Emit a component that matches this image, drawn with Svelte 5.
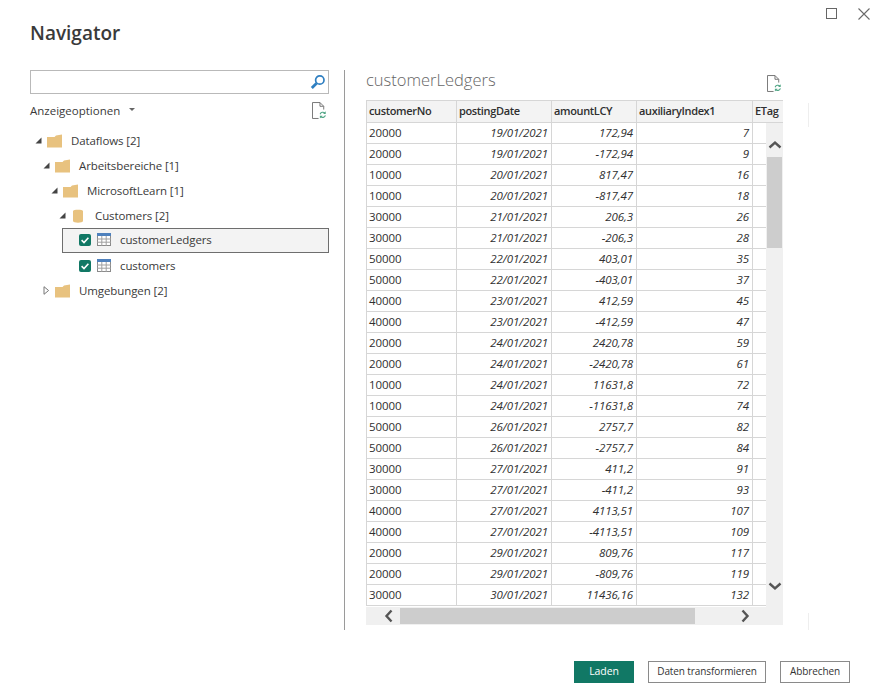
<script>
  const tree = [
    { label: 'Dataflows [2]', depth: 0, kind: 'folder', open: true },
    { label: 'Arbeitsbereiche [1]', depth: 1, kind: 'folder', open: true },
    { label: 'MicrosoftLearn [1]', depth: 2, kind: 'folder', open: true },
    { label: 'Customers [2]', depth: 3, kind: 'db', open: true },
    { label: 'customerLedgers', depth: 4, kind: 'table', selected: true },
    { label: 'customers', depth: 4, kind: 'table' },
    { label: 'Umgebungen [2]', depth: 1, kind: 'folder', open: false }
  ];
  const rows = [
    ['20000','19/01/2021','172,94','7'],['20000','19/01/2021','-172,94','9'],
    ['10000','20/01/2021','817,47','16'],['10000','20/01/2021','-817,47','18'],
    ['30000','21/01/2021','206,3','26'],['30000','21/01/2021','-206,3','28'],
    ['50000','22/01/2021','403,01','35'],['50000','22/01/2021','-403,01','37'],
    ['40000','23/01/2021','412,59','45'],['40000','23/01/2021','-412,59','47'],
    ['20000','24/01/2021','2420,78','59'],['20000','24/01/2021','-2420,78','61'],
    ['10000','24/01/2021','11631,8','72'],['10000','24/01/2021','-11631,8','74'],
    ['50000','26/01/2021','2757,7','82'],['50000','26/01/2021','-2757,7','84'],
    ['30000','27/01/2021','411,2','91'],['30000','27/01/2021','-411,2','93'],
    ['40000','27/01/2021','4113,51','107'],['40000','27/01/2021','-4113,51','109'],
    ['20000','29/01/2021','809,76','117'],['20000','29/01/2021','-809,76','119'],
    ['30000','30/01/2021','11436,16','132']
  ];
</script>

{#snippet docRefresh()}
  <svg class="docicon" width="15" height="17" viewBox="0 0 16 18" fill="none">
    <path d="M7 17.5H.5V.5H8.5L12.5 4.5V8M8.5 .5V4.5H12.5" stroke="#707070" stroke-width="1"/>
    <path d="M8.7 13A3 3 0 0 1 13.8 11.8M14.3 14.2A3 3 0 0 1 9.2 15.4" stroke="#4fa585" stroke-width="1.2"/>
    <path d="M14.6 9.8V12.6H11.8ZM8.4 17.4V14.6H11.2Z" fill="#4fa585"/>
  </svg>
{/snippet}

<div class="dialog">
  <div class="winctl">
    <span class="max"></span>
    <svg width="12" height="12" viewBox="0 0 12 12"><path d="M.5.5L11.5 11.5M11.5.5L.5 11.5" stroke="#6a6a6a" stroke-width="1.1"/></svg>
  </div>

  <h1>Navigator</h1>

  <div class="main">
    <section class="left">
      <div class="search">
        <svg width="16" height="16" viewBox="0 0 16 16" fill="none">
          <circle cx="9.8" cy="6" r="4.2" stroke="#2f7fc1" stroke-width="1.7"/>
          <path d="M6.6 9.2L1.8 14" stroke="#2f7fc1" stroke-width="2.8"/>
        </svg>
      </div>
      <div class="opts">
        <span>Anzeigeoptionen</span>
        <span class="caret"></span>
        {@render docRefresh()}
      </div>
      <ul class="tree">
        {#each tree as n}
          <li class="node" class:selected={n.selected} class:leaf={n.kind === 'table'} style:margin-left="{(n.kind === 'table' ? 0 : 5) + n.depth * 8}px">
            {#if n.kind === 'table'}
              <span class="check">
                <svg width="12" height="12" viewBox="0 0 12 12" fill="none"><path d="M2.6 6.2L5 8.5L9.4 3.8" stroke="#fff" stroke-width="1.6"/></svg>
              </span>
              <svg class="tbl" width="14" height="13" viewBox="0 0 14 13">
                <rect x="0.5" y="0.5" width="13" height="12" fill="#fff" stroke="#8a8a8a"/>
                <rect x="0" y="0" width="14" height="3" fill="#4f81bd"/>
                <path d="M0 6H14M0 9.2H14M4.8 3V13M9.2 3V13" stroke="#a0a0a0" stroke-width="1"/>
              </svg>
            {:else}
              <span class="arrow">
                <svg width="7" height="9" viewBox="0 0 7 9">
                  {#if n.open}
                    <path d="M6.5 1.5V7.5H.5Z" fill="#444"/>
                  {:else}
                    <path d="M1 .7L5.6 4.5L1 8.3Z" fill="#fff" stroke="#777"/>
                  {/if}
                </svg>
              </span>
              {#if n.kind === 'folder'}
                <svg class="ic" width="15" height="14" viewBox="0 0 15 14">
                  <path d="M0 3H7.5L9 1.6L15 .5V13.5H0Z" fill="#e8c27f"/>
                </svg>
              {:else}
                <svg class="ic db" width="10" height="14" viewBox="0 0 10 14">
                  <path d="M0 2C0 .4 10 .4 10 2V12C10 14.2 0 14.2 0 12Z" fill="#e8c27f"/>
                </svg>
              {/if}
            {/if}
            <span class="label">{n.label}</span>
          </li>
        {/each}
      </ul>
    </section>

    <div class="divider"></div>

    <section class="right">
      <div class="rhead">
        <h2>customerLedgers</h2>
        {@render docRefresh()}
      </div>
      <div class="grid">
        <div class="row head">
          <div>customerNo</div><div>postingDate</div><div>amountLCY</div><div>auxiliaryIndex1</div><div>ETag</div>
        </div>
        <div class="body">
          <div class="rows">
            {#each rows as r}
              <div class="row">
                <div>{r[0]}</div><div class="num">{r[1]}</div><div class="num">{r[2]}</div><div class="num">{r[3]}</div><div></div>
              </div>
            {/each}
          </div>
          <div class="vbar">
            <svg class="cv" width="14" height="9" viewBox="0 0 14 9" fill="none"><path d="M1.5 7.5L7 2.5L12.5 7.5" stroke="#555" stroke-width="2.4"/></svg>
            <div class="vthumb"></div>
            <svg class="cv down" width="14" height="9" viewBox="0 0 14 9" fill="none"><path d="M1.5 1.5L7 6.5L12.5 1.5" stroke="#555" stroke-width="2.4"/></svg>
          </div>
        </div>
        <div class="hbar">
          <svg width="9" height="14" viewBox="0 0 9 14" fill="none"><path d="M7.5 1.5L2.5 7L7.5 12.5" stroke="#555" stroke-width="2.4"/></svg>
          <div class="hthumb"></div>
          <svg class="next" width="9" height="14" viewBox="0 0 9 14" fill="none"><path d="M1.5 1.5L6.5 7L1.5 12.5" stroke="#555" stroke-width="2.4"/></svg>
        </div>
      </div>
    </section>
    <div class="ghost">
      <span></span>
      <span class="low"></span>
    </div>
  </div>

  <div class="actions">
    <button class="primary">Laden</button>
    <button class="transform">Daten transformieren</button>
    <button class="cancel">Abbrechen</button>
  </div>
</div>

<style>
  :global(body) { margin: 0; background: #fff; }
  .dialog {
    position: relative;
    width: 879px; height: 700px;
    box-sizing: border-box;
    padding: 22px 29px 0 30px;
    font-family: "Open Sans", "Noto Sans", sans-serif;
    font-size: 11.5px;
    color: #2f2f2f;
    letter-spacing: -0.1px;
    overflow: hidden;
  }
  .winctl {
    position: absolute; top: 8px; right: 9px;
    display: flex; gap: 21px; align-items: flex-start;
  }
  .max { width: 9px; height: 9px; border: 1px solid #666; }
  h1 { margin: 0; font-size: 19px; line-height: 23px; font-weight: 600; color: #3a3a3a; letter-spacing: 0; }

  .main { display: flex; margin-top: 25px; height: 560px; position: relative; }
  .left { width: 299px; flex: none; }
  .search {
    height: 22px; border: 1px solid #b9b9b9;
    display: flex; justify-content: flex-end; align-items: center; padding-right: 2px;
  }
  .opts { display: flex; align-items: center; height: 25px; margin-top: 4px; color: #3a3a3a; letter-spacing: 0; }
  .caret { width: 0; height: 0; margin-left: 9px; margin-bottom: 2px; border: 3px solid transparent; border-top: 3px solid #666; border-bottom: 0; }
  .opts .docicon { margin-left: auto; margin-right: 2px; }

  .tree { list-style: none; margin: 5px 0 0; padding: 0; }
  .node { display: flex; align-items: center; height: 25px; box-sizing: border-box; }
  .arrow { width: 12px; display: flex; flex: none; }
  .ic { flex: none; }
  .db { margin: 0 3px 0 2px; }
  .label { margin-left: 9px; color: #3a3a3a; }
  .leaf { padding-left: 17px; }
  .selected {
    background: #f3f3f3; border: 1px solid #6e6e6e;
    padding-left: 16px;
    padding-bottom: 2px;
  }
  .check {
    width: 12px; height: 12px; border-radius: 2px; background: #117865; flex: none; display: flex;
  }
  .tbl { margin-left: 6px; flex: none; }

  .divider { width: 1px; background: #9a9a9a; margin: 0 21px 0 15px; flex: none; }

  .right { width: 417px; flex: none; }
  .rhead { display: flex; justify-content: space-between; align-items: flex-start; height: 30px; padding-right: 1px; }
  .rhead .docicon { margin-top: 5px; }
  h2 { margin: 0; font-size: 16.5px; line-height: 19px; font-weight: 300; color: #666; letter-spacing: 0; }

  .grid { overflow: hidden; }
  .row {
    display: grid;
    grid-template-columns: 90px 95px 85px 116px 31px;
    height: 21px;
    box-sizing: border-box;
    border-bottom: 1px solid #d6d6d6;
    line-height: 20px;
    color: #2f2f2f;
  }
  .row > div { border-left: 1px solid #d6d6d6; padding: 0 3px 0 2px; white-space: nowrap; overflow: hidden; }
  .row .num { text-align: right; font-style: italic; padding-right: 3px; }
  .head { height: 23px; background: #f3f3f3; border-top: 1px solid #d6d6d6; border-bottom: 1px solid #d6d6d6; font-size: 11px; letter-spacing: -0.35px; font-weight: 600; line-height: 20px; }
  .body { display: flex; height: 484px; }
  .rows { width: 400px; overflow: hidden; flex: none; }
  .vbar {
    width: 17px; background: #f0f0f0; display: flex; flex-direction: column; align-items: center;
  }
  .cv { margin-top: 17px; flex: none; }
  .vthumb { width: 15px; height: 91px; margin-top: 8px; background: #cdcdcd; }
  .cv.down { margin-top: auto; margin-bottom: 16px; }
  .hbar { height: 18px; background: #f0f0f0; display: flex; align-items: center; padding-left: 18px; }
  .hthumb { width: 295px; height: 16px; margin-left: 7px; background: #cdcdcd; }
  .next { margin-left: 46px; }

  .ghost { position: absolute; left: 778px; top: 33px; bottom: 0; display: flex; flex-direction: column; justify-content: space-between; }
  .ghost span { display: block; width: 1px; height: 24px; background: #eeeeee; }
  .ghost .low { height: 17px; }

  .actions { position: absolute; top: 661px; right: 29px; display: flex; gap: 14px; }
  button {
    height: 22px; padding: 0 0 2px; box-sizing: border-box;
    background: #fff; border: 1px solid #8a8a8a; color: #333;
    font: inherit; font-size: 10px; letter-spacing: inherit;
  }
  .primary { width: 60px; font-size: 10.5px; background: #117865; border-color: #117865; color: #fff; }
  .transform { width: 118px; }
  .cancel { width: 70px; }
</style>
